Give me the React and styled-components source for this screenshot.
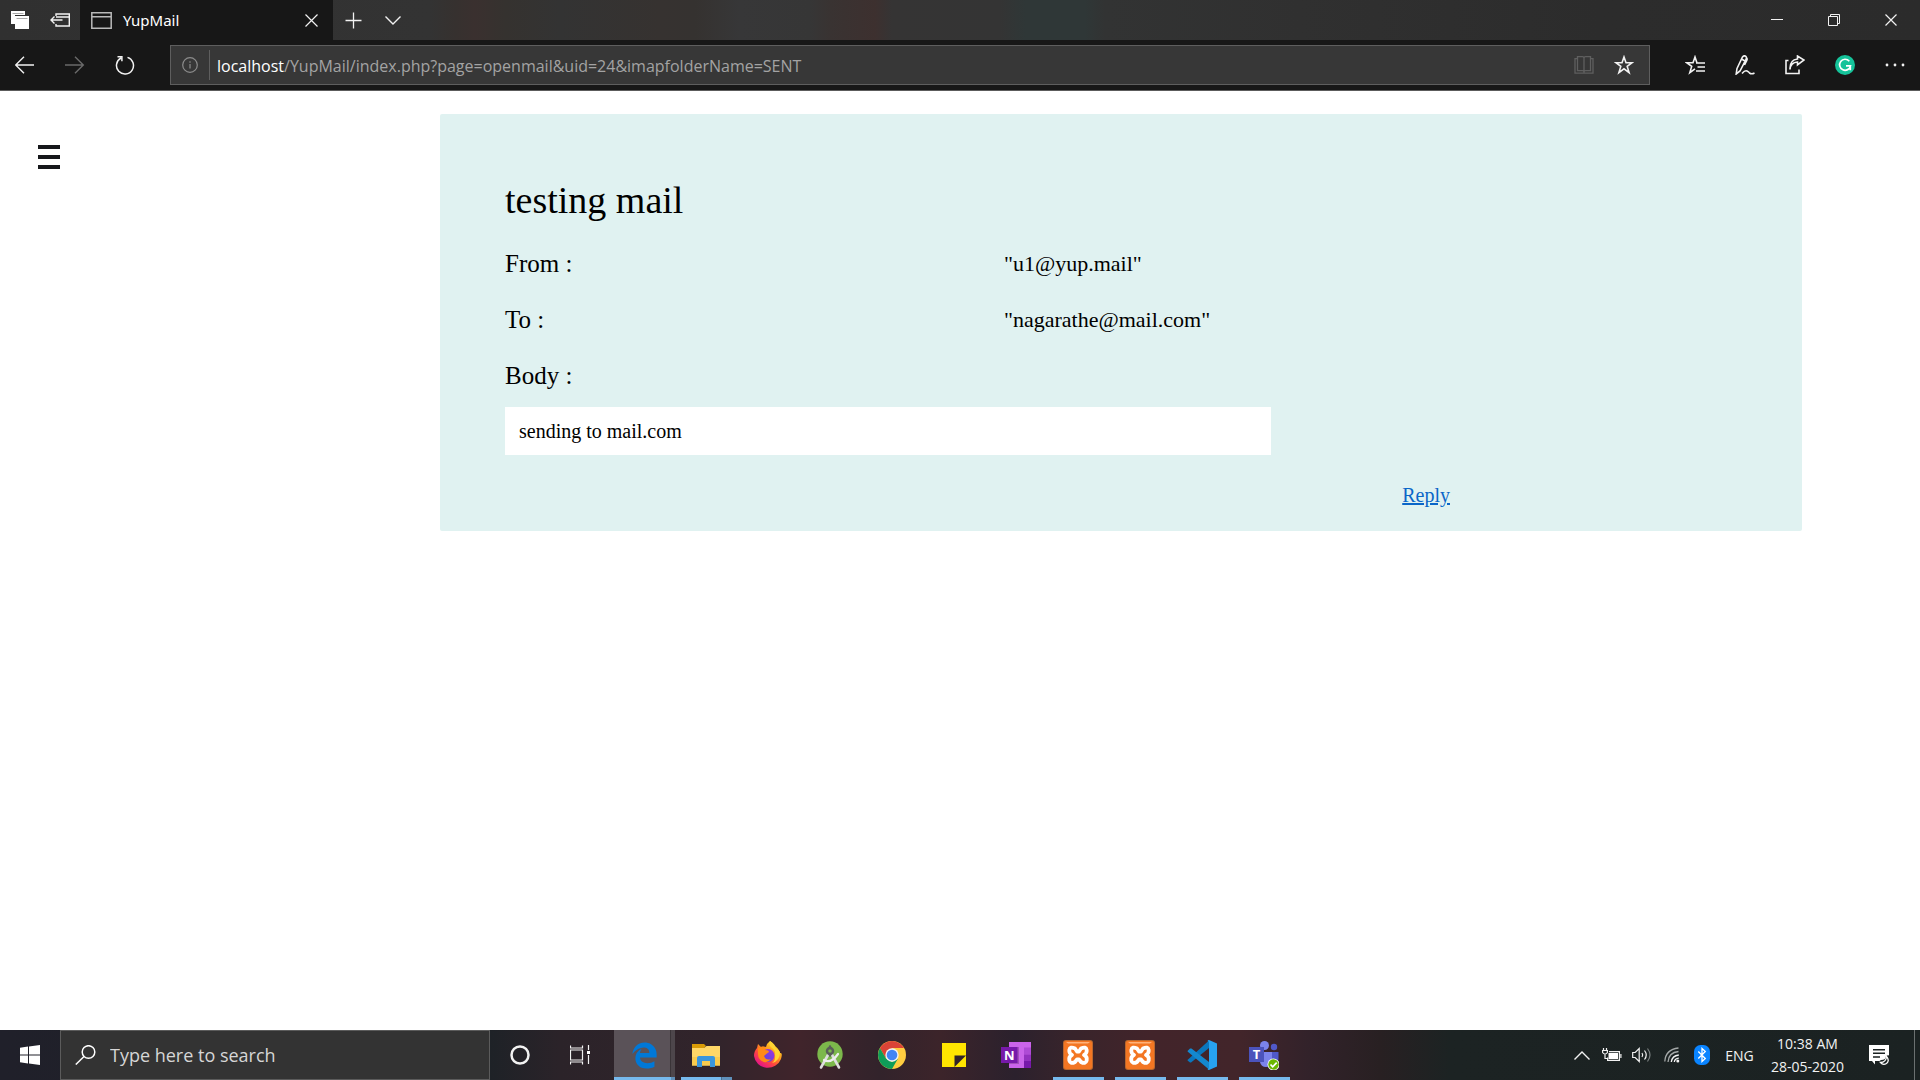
import React from "react";
import styled, { createGlobalStyle, css } from "styled-components";

const ui = `"Open Sans", "Noto Sans", sans-serif`;
const uiWide = `"Noto Sans", "Open Sans", sans-serif`;
const serif = `"Liberation Serif", "Times New Roman", serif`;

const GlobalStyle = createGlobalStyle`
  *, *::before, *::after { box-sizing: border-box; }
  body { margin: 0; background: #fff; }
  button, input { font: inherit; color: inherit; }
  svg { display: block; flex: none; }
`;

const Desktop = styled.div`
  display: flex;
  flex-direction: column;
  min-height: 100vh;
  font-family: ${ui};
`;

/* ---------- Browser chrome ---------- */

const IconButton = styled.button`
  display: flex;
  align-items: center;
  justify-content: center;
  flex: none;
  width: ${(p) => p.$width || 40}px;
  align-self: stretch;
  padding: 0;
  border: 0;
  background: none;
  color: ${(p) => p.$color || "#f2f2f2"};
`;

const TabStrip = styled.header`
  display: flex;
  height: 40px;
  background: linear-gradient(90deg, #303030 0, #333 430px, #36312f 455px, #3a302f 475px, #35322f 505px, #333 560px, #363230 660px, #353230 695px, #373738 740px, #363636 810px, #393332 830px, #3d302f 875px, #353434 892px, #343434 1000px, #2f3737 1025px, #2f3737 1085px, #323333 1105px, #303030 1300px, #2c2c2c 1600px, #2b2b2b 100%);
`;

const Tab = styled.div`
  display: flex;
  align-items: center;
  width: 253px;
  padding-left: 11px;
  gap: 11px;
  background: #171717;
  color: #fff;
  font-family: ${uiWide};
  font-size: 15px;
  line-height: 20px;
`;

const TabTitle = styled.span`
  flex: 1;
`;

const WindowControls = styled.div`
  display: flex;
  gap: 1px;
  margin-left: auto;
  padding-right: 1px;
`;

const Toolbar = styled.nav`
  display: flex;
  align-items: center;
  height: 51px;
  background: #171717;
  border-bottom: 1px solid #5c5c5c;
`;

const AddressBar = styled.div`
  display: flex;
  align-items: center;
  flex: 1;
  height: 40px;
  margin: 0 20px;
  padding-right: 5px;
  background: #373737;
  border: 1px solid #5e5e5e;
`;

const Divider = styled.span`
  width: 1px;
  height: 30px;
  background: #5e5e5e;
`;

const Url = styled.div`
  flex: 1;
  padding: 2px 0 0 7px;
  color: #a3a3a3;
  font-size: 16px;
  line-height: 20px;
  b {
    color: #fff;
    font-weight: 400;
  }
`;

/* ---------- Mail page ---------- */

const Page = styled.div`
  display: grid;
  grid-template-columns: 440px 1fr;
  flex: 1;
  align-items: start;
  padding: 23px 118px 23px 0;
  font-family: ${serif};
  color: #000;
`;

const MenuButton = styled.button`
  display: flex;
  flex-direction: column;
  gap: 6px;
  width: 22px;
  margin: 31px 38px;
  padding: 0;
  border: 0;
  background: none;
`;

const MenuBar = styled.span`
  height: 4px;
  background: #16181b;
`;

const MailCard = styled.main`
  padding: 60px 65px 21px;
  border-radius: 2px;
  background: #e0f2f1;
`;

const Subject = styled.h1`
  margin: 0;
  font-size: 38px;
  font-weight: 400;
  line-height: 52px;
`;

const Fields = styled.dl`
  display: grid;
  grid-template-columns: 499px 1fr;
  row-gap: 16px;
  margin: 18px 0 0;
  line-height: 40px;
`;

const Label = styled.dt`
  font-size: 25px;
`;

const Value = styled.dd`
  margin: 0;
  font-size: 22px;
`;

const Body = styled.p`
  max-width: 766px;
  margin: 11px 0 0;
  padding: 10px 14px;
  background: #fff;
  font-size: 20px;
  line-height: 28px;
`;

const Actions = styled.div`
  display: flex;
  justify-content: flex-end;
  margin-top: 25px;
  padding-right: 287px;
`;

const ReplyLink = styled.a`
  color: #0a66c8;
  font-size: 20px;
  line-height: 30px;
`;

/* ---------- Taskbar ---------- */

const Taskbar = styled.footer`
  display: flex;
  height: 50px;
  color: #fff;
  background: linear-gradient(90deg, #20202a 0, #1e2227 490px, #2b2329 560px, #32242b 720px, #40242b 800px, #32232b 880px, #3c242a 940px, #2b212d 1015px, #38242b 1070px, #42242a 1150px, #42252a 1240px, #32222a 1310px, #282022 1380px, #1c2323 1450px, #1b2222 100%);
`;

const SearchBox = styled.label`
  display: flex;
  align-items: center;
  width: 430px;
  padding-left: 14px;
  gap: 14px;
  background: #333;
  border: 1px solid #5b5b5b;
`;

const SearchInput = styled.input`
  flex: 1;
  min-width: 0;
  padding: 0;
  border: 0;
  outline: 0;
  background: none;
  font-size: 18px;
  line-height: 24px;
  &::placeholder {
    color: #d6d6d6;
    opacity: 1;
  }
`;

const Apps = styled.div`
  display: flex;
  margin-left: 3px;
`;

const AppButton = styled(IconButton)`
  width: 62px;
  background-repeat: no-repeat;
  ${(p) =>
    p.$state === "open" &&
    css`
      background-image: linear-gradient(#76b9ed, #76b9ed);
      background-position: 6px 100%;
      background-size: 51px 3px;
    `}
  ${(p) =>
    p.$state === "stacked" &&
    css`
      background-image: linear-gradient(90deg, #76b9ed 40px, #4c6f8f 40px, #4c6f8f 41px, #5f90ba 41px);
      background-position: 6px 100%;
      background-size: 51px 3px;
    `}
  ${(p) =>
    p.$state === "active" &&
    css`
      background-image: linear-gradient(90deg, #76b9ed 57px, #5f90ba 57px),
        linear-gradient(90deg, #5a5258 56px, #3a3438 56px, #3a3438 57px, #4d464b 57px);
      background-position: 1px 100%, 1px 0;
      background-size: 61px 3px, 61px 50px;
    `}
`;

const Tray = styled.div`
  display: flex;
  align-items: center;
  margin-left: auto;
  font-size: 14px;
`;

const Clock = styled(IconButton)`
  flex-direction: column;
  line-height: 23px;
`;

const ShowDesktop = styled.button`
  align-self: stretch;
  width: 6px;
  margin-left: 9px;
  padding: 0;
  border: 0;
  border-left: 1px solid #6b7070;
  background: none;
`;

/* ---------- Icons ---------- */

const Line = ({ w = 20, h = 20, sw = 1, children, ...rest }) => (
  <svg width={w} height={h} viewBox={`0 0 ${w} ${h}`} fill="none" stroke="currentColor" strokeWidth={sw} aria-hidden="true" {...rest}>
    {children}
  </svg>
);

const TabsIcon = () => (
  <Line w={18} h={18} stroke="none">
    <path fill="#fff" d="M0 0h14v4H4v9H0z" />
    <path fill="#fff" d="M4 5h14v13H4z" />
    <path stroke="#aaa" d="M1.500 2.500h11M5.500 7.500h11" />
  </Line>
);

const SetAsideIcon = () => (
  <Line w={20} h={14} sw={1.400}>
    <path d="M6 3V1h13.300v12H6v-2M6 4h13M1 7h11.500M4.500 3.500L1 7l3.500 3.500" />
  </Line>
);

const PageIcon = () => (
  <Line w={21} h={17} stroke="#b9b9b9" sw={1.500}>
    <path d="M.8.8h19.400v15.400H.8zM1 4.800h19" />
  </Line>
);

const CrossIcon = ({ size = 13 }) => (
  <Line w={size} h={size} sw={1.200}>
    <path d={`M.5.5l${size - 1} ${size - 1}M${size - 0.5}.5L.5 ${size - 0.5}`} />
  </Line>
);

const PlusIcon = () => (
  <Line w={17} h={17} sw={1.300}>
    <path d="M8.500.5v16M.5 8.500h16" />
  </Line>
);

const ChevronIcon = ({ up }) => (
  <Line w={16} h={9} sw={1.400}>
    <path d={up ? "M.5 8.500L8 1l7.500 7.500" : "M.5.5L8 8 15.500.5"} />
  </Line>
);

const MinimizeIcon = () => (
  <Line w={12} h={12}>
    <path d="M0 5.500h12" />
  </Line>
);

const RestoreIcon = () => (
  <Line w={12} h={12}>
    <path d="M.5 2.500h9v9h-9zM2.500 2.500v-2h9v9h-2" />
  </Line>
);

const ArrowIcon = ({ right }) => (
  <Line w={20} h={18} sw={1.400}>
    <path d={right ? "M0 9h18.500M10 .7L18.300 9 10 17.300" : "M19 9H1M9 .7L.7 9 9 17.300"} />
  </Line>
);

const RefreshIcon = () => (
  <Line w={20} h={20} sw={1.500}>
    <path d="M12.500 2.400a8.500 8.500 0 1 1-6.500.6M2.500 1.800h4.400v4.400" />
  </Line>
);

const InfoIcon = () => (
  <Line w={16} h={16} sw={1.200}>
    <circle cx="8" cy="8" r="7.300" />
    <path d="M8 7v4.500M8 4.300v1.400" />
  </Line>
);

const BookIcon = () => (
  <Line w={20} h={18} sw={1.300}>
    <path d="M3.500.7h5q1.500 0 1.500 1.300Q10 .7 11.500.7h5v14h-5Q10 14.700 10 16q0-1.300-1.500-1.300h-5zM10 2v15M3.500 2.700H1v14.500h18V2.700h-2.500" />
  </Line>
);

const StarIcon = () => (
  <Line w={20} h={20} sw={1.600}>
    <path d="M10 2l2 5.700h6.200l-5 3.700 1.900 6.200-5.100-3.800-5.100 3.800 1.900-6.200-5-3.700H8z" />
  </Line>
);

const FavoritesIcon = () => (
  <Line w={20} h={20} sw={1.600}>
    <path d="M12.500 8H12l-2-6-2 5.700H1.700l5 3.700-1.900 6.200L10 13.800M11 8h9M12.500 12H20M11 16h9" />
  </Line>
);

const PenIcon = () => (
  <Line w={20} h={20} sw={1.600}>
    <path d="M2 13.500L7.500 2q1.500-2 3.300-.7 1.200 1 .2 3L5 16l-3.800 3zM2 13.500L1.200 19M6.500 4l3.500 2M11 2.500q1.700 1 .8 2.800L9.500 10M7 18.500q3-3.500 5-2.500t2.500 2q2 1.500 5 0" />
  </Line>
);

const ShareIcon = () => (
  <Line w={20} h={20} sw={1.600}>
    <path d="M3.500 5.500H1v13h13v-4M5 14.500q.5-7 7.500-7.500V10l6.500-5-6.500-4v3Q4.500 5 5 14.500z" />
  </Line>
);

const GrammarlyIcon = () => (
  <Line w={20} h={20}>
    <circle cx="10" cy="10" r="10" fill="#15c39a" stroke="none" />
    <path stroke="#fff" strokeWidth="1.700" d="M14.300 6.200A5.500 5.500 0 1 0 15.500 10.800H11M15.300 10.500v4.700" />
  </Line>
);

const DotsIcon = () => (
  <Line w={20} h={4} stroke="none">
    <g fill="#f2f2f2">
      <circle cx="2" cy="2" r="1.400" />
      <circle cx="10" cy="2" r="1.400" />
      <circle cx="18" cy="2" r="1.400" />
    </g>
  </Line>
);

const WindowsLogo = () => (
  <Line w={20} h={20} stroke="none">
    <path fill="#fff" d="M0 2.700L8 1.600V9.500H0zM9 1.400L20 0v9.500H9zM0 10.500h8v7.900l-8-1.100zM9 10.500h11V20L9 18.500z" />
  </Line>
);

const SearchIcon = () => (
  <Line w={21} h={20} sw={1.500}>
    <circle cx="13.500" cy="7" r="6.300" />
    <path d="M9 11.500L.8 19.500" />
  </Line>
);

const CortanaIcon = () => (
  <Line w={20} h={20} sw={2.500}>
    <circle cx="10" cy="10" r="8.500" />
  </Line>
);

const TaskViewIcon = () => (
  <Line w={20} h={20} sw={1.200}>
    <path d="M.5 5h12v10H.5zM.5.500V3h12V.500M.5 19.500V17h12v2.500M18.500 0v5M18.500 10v9" />
    <path fill="#fff" stroke="none" d="M17 6h3v3h-3z" />
  </Line>
);

const EdgeIcon = () => (
  <svg width="27" height="27" viewBox="0 0 512 512" aria-hidden="true">
    <path
      fill="#0078d7"
      d="M486.286 243.671c0-44.032-7.754-84.465-28.801-122.405C416.498 47.879 343.912 8.001 258.893 8.001 118.962 7.724 40.617 113.214 26.056 227.679c42.429-61.312 117.073-121.376 220.375-124.966 0 0 109.666 0 99.419 104.957H169.997c6.369-37.386 18.554-58.986 34.339-78.926-75.048 34.893-121.850 96.096-120.742 188.315.83 71.448 50.124 144.836 120.743 171.976 83.357 31.847 192.776 7.200 240.132-21.321V363.307c-80.864 56.494-270.871 60.925-272.255-67.572h314.073v-52.064z"
    />
  </svg>
);

const FolderIcon = () => (
  <Line w={28} h={24} stroke="none">
    <path fill="#d99b06" d="M0 1h12l2 2-2 2H0z" />
    <path fill="#ffd767" d="M0 5h12l2.500-2H28v19.500H0z" />
    <path fill="#f9cb4e" d="M0 14h28v8.500H0z" />
    <path fill="#3a96dd" d="M5 15q0-2 2-2h14q2 0 2 2v9h-5v-6h-8v6H5z" />
  </Line>
);

const FirefoxIcon = () => (
  <Line w={30} h={30} stroke="none">
    <defs>
      <linearGradient id="fx" x1=".8" y1=".1" x2=".2" y2=".9">
        <stop offset="0" stopColor="#ffe226" />
        <stop offset=".35" stopColor="#ff9a1f" />
        <stop offset=".65" stopColor="#ff4a3c" />
        <stop offset="1" stopColor="#e31587" />
      </linearGradient>
      <linearGradient id="fxg" x1="0" y1="1" x2="1" y2="0">
        <stop offset="0" stopColor="#4a4be0" />
        <stop offset="1" stopColor="#a530dd" />
      </linearGradient>
    </defs>
    <path fill="url(#fx)" d="M17 1q2 1 4 5 4 1 6 7 3-1 1 6a14 13.500 0 0 1-27-3q0-5 3-8l1-4 3 3q3-1 5 0 1-4 4-6z" />
    <circle cx="15" cy="15.500" r="6.500" fill="url(#fxg)" />
    <path fill="#ff8a16" d="M5 8q5-3 8 0l-1 2q4 0 4 2-3 2-5 4 2 5 7 3-3 4-7 3-6-2-6-8z" />
    <path fill="#ffd432" d="M17 1q-2 4 2 7t3 7q1 5-3 8 8-2 8-11-2-3-4-4-1-4-6-7z" />
  </Line>
);

const AndroidStudioIcon = () => (
  <Line w={30} h={30} strokeLinecap="round">
    <circle cx="15" cy="14" r="12.700" fill="#7cb84b" stroke="none" />
    <path stroke="#dedede" strokeWidth="2.600" d="M13.500 14L6 27.500M16.500 14L24 27.500" />
    <path stroke="#eee" strokeWidth="2.200" d="M9 20q7 4 14-6" />
    <circle cx="15" cy="11" r="3" stroke="#595f58" strokeWidth="2.500" />
    <path stroke="#595f58" strokeWidth="2.500" d="M15 6.500V8M15 14v1.500" />
  </Line>
);

const ChromeIcon = () => (
  <Line w={28} h={28} stroke="none">
    <circle cx="14" cy="14" r="14" fill="#ffcd40" />
    <path fill="#db4437" d="M1.900 7A14 14 0 0 1 26.100 7H14L8 17.500z" />
    <path fill="#0f9d58" d="M1.900 7L8 17.500l6 3.500 6-3.500L14 28A14 14 0 0 1 1.900 7z" />
    <circle cx="14" cy="14" r="6.700" fill="#f1f1f1" />
    <circle cx="14" cy="14" r="5.300" fill="#4285f4" />
  </Line>
);

const StickyNotesIcon = () => (
  <Line w={24} h={24} stroke="none">
    <path fill="#ffe500" d="M0 0h24v24H0z" />
    <path fill="#302329" d="M12.500 12.500H24L12.500 24z" />
  </Line>
);

const glyph = { fontFamily: ui, fontWeight: 700, fontSize: 13 };

const OneNoteIcon = () => (
  <Line w={30} h={28} stroke="none">
    <path fill="#ca64ea" d="M8 1h22v26H8z" />
    <path fill="#ae4bd5" d="M23 6.500h7v7h-7z" />
    <path fill="#9332bf" d="M23 13.500h7V20h-7z" />
    <path fill="#7719aa" d="M23 20h7v7h-7z" />
    <path fill="#000" opacity=".2" d="M8 6h10v17H8z" />
    <path fill="#7719aa" d="M0 6h16.500v16H0z" />
    <text x="8.200" y="18.600" textAnchor="middle" fill="#fff" style={glyph}>N</text>
  </Line>
);

const XamppIcon = () => (
  <Line w={30} h={30} stroke="none">
    <rect width="30" height="30" rx="3" fill="#b9672d" />
    <rect x="1" y="1" width="28" height="28" rx="2" fill="#f37623" />
    <path fill="#ffb27a" d="M3 2h24l-2 1.500H5z" />
    <path
      fill="none"
      stroke="#fff"
      strokeWidth="3.800"
      strokeLinejoin="round"
      d="M12 8.500Q7 6 6.300 10q-.3 3.500 2.700 5-3.500 1.500-2.700 5.500 1.200 4 5.700 1.500l2-2.500h2l2 2.500q4.500 2.500 5.700-1.500.8-4-2.700-5.500 3-1.500 2.700-5-.7-4-5.700-1.500l-2 3h-2z"
    />
  </Line>
);

const VsCodeIcon = () => (
  <Line w={30} h={30} stroke="none">
    <path fill="#0a76bd" d="M1 19.500L22 .500V8L4 22.500H3L.5 20.500z" />
    <path fill="#1488cf" d="M1 10.500l2-2h1.500L22 22v7.500L.5 11.500z" />
    <path fill="#27a2f0" d="M22 0l8 3.500v23L22 30q-1 0-1.500-1 1.500 0 1.500-2V3q0-2-1.500-2Q21 0 22 0z" />
  </Line>
);

const TeamsIcon = () => (
  <Line w={30} h={30} stroke="none">
    <circle cx="15.500" cy="5.500" r="4.500" fill="#7b83eb" />
    <circle cx="25" cy="7" r="3.200" fill="#5059c9" />
    <path fill="#5059c9" d="M21 12h8.500v7q-1 5-6 5h-3z" />
    <path fill="#7b83eb" d="M11 12h12v9q-1 6-6 6t-6-5z" />
    <path fill="#4b53bc" d="M0 7h15v15H0z" />
    <text x="7.500" y="19" textAnchor="middle" fill="#fff" style={glyph}>T</text>
    <circle cx="24.500" cy="24.500" r="6" fill="#fff" />
    <circle cx="24.500" cy="24.500" r="5.200" fill="#6bb700" />
    <path d="M21.500 24.500l2.200 2.300 4-4.200" fill="none" stroke="#fff" strokeWidth="1.700" />
  </Line>
);

const BatteryIcon = () => (
  <Line w={20} h={14} sw={1.200}>
    <path d="M7 3.600h10.400v8.800H5.600V9.500M18.900 6v4" />
    <path fill="#fff" stroke="none" d="M6.500 5h9.500v6H6.500z" />
    <path d="M1.500 0v2.500M4.500 0v2.500M.6 2.500h4.800v2q-.8 1.500-2.400 1.500T.6 4.500zM3 6v4.500h2.500" />
  </Line>
);

const VolumeIcon = () => (
  <Line w={20} h={18} sw={1.200}>
    <path d="M.7 6.500h2.500l4-4v13l-4-4H.7zM10 7q1.500 2 0 4M12.500 4.500q3.500 4.500 0 9" />
    <path stroke="#7b8080" d="M15.500 2.500q5 6.500 0 13" />
  </Line>
);

const WifiIcon = () => (
  <Line w={16} h={16} sw={1.300}>
    <path stroke="#a5a9a9" d="M.8 14.500Q1.500 2.500 14.500 1M4 15Q4.500 5.500 14.500 4.500" />
    <path d="M7.300 15Q8 8.800 14.800 8M10.300 15q.5-3.500 4.500-3.800" />
    <circle cx="13.800" cy="14" r="1.500" fill="currentColor" stroke="none" />
  </Line>
);

const BluetoothIcon = () => (
  <Line w={16} h={20}>
    <rect width="16" height="20" rx="6.500" fill="#0a84ff" stroke="none" />
    <path stroke="#fff" strokeWidth="1.300" d="M4.300 6.500l7 7-3.300 3v-13l3.300 3-7 7" />
  </Line>
);

const NotificationIcon = () => (
  <Line w={20} h={20} stroke="none">
    <path fill="#fff" d="M0 0h20v10.500q-1-.5-3 .5 0 4-5 4l-1.500 1H6v3.500L3 16H0z" />
    <path stroke="#1b2222" strokeWidth="1.400" d="M4 4.700h12M4 8.300h12M4 12h7" />
    <path stroke="#fff" strokeWidth="1.300" d="M17.500 11.500q3.500 4 0 7-3.500 2-6-1 5.500 0 6-6z" />
  </Line>
);

const apps = [
  { name: "Microsoft Edge", state: "active", icon: <EdgeIcon /> },
  { name: "File Explorer", state: "stacked", icon: <FolderIcon /> },
  { name: "Firefox", icon: <FirefoxIcon /> },
  { name: "Android Studio", icon: <AndroidStudioIcon /> },
  { name: "Chrome", icon: <ChromeIcon /> },
  { name: "Sticky Notes", icon: <StickyNotesIcon /> },
  { name: "OneNote", icon: <OneNoteIcon /> },
  { name: "XAMPP Control Panel", state: "open", icon: <XamppIcon /> },
  { name: "XAMPP Shell", state: "open", icon: <XamppIcon /> },
  { name: "Visual Studio Code", state: "open", icon: <VsCodeIcon /> },
  { name: "Microsoft Teams", state: "open", icon: <TeamsIcon /> },
];

export default function App() {
  return (
    <Desktop>
      <GlobalStyle />

      <TabStrip>
        <IconButton aria-label="Tabs you've set aside"><TabsIcon /></IconButton>
        <IconButton aria-label="Set these tabs aside"><SetAsideIcon /></IconButton>
        <Tab>
          <PageIcon />
          <TabTitle>YupMail</TabTitle>
          <IconButton $width={43} aria-label="Close tab"><CrossIcon /></IconButton>
        </Tab>
        <IconButton aria-label="New tab"><PlusIcon /></IconButton>
        <IconButton aria-label="Show tab previews"><ChevronIcon /></IconButton>
        <WindowControls>
          <IconButton $width={56} aria-label="Minimize"><MinimizeIcon /></IconButton>
          <IconButton $width={56} aria-label="Restore"><RestoreIcon /></IconButton>
          <IconButton $width={56} aria-label="Close"><CrossIcon size={12} /></IconButton>
        </WindowControls>
      </TabStrip>

      <Toolbar>
        <IconButton $width={50} aria-label="Back"><ArrowIcon /></IconButton>
        <IconButton $width={50} $color="#6a6a6a" aria-label="Forward"><ArrowIcon right /></IconButton>
        <IconButton $width={50} aria-label="Refresh"><RefreshIcon /></IconButton>
        <AddressBar>
          <IconButton $width={38} $color="#8c8c8c" aria-label="Site information"><InfoIcon /></IconButton>
          <Divider />
          <Url><b>localhost</b>/YupMail/index.php?page=openmail&amp;uid=24&amp;imapfolderName=SENT</Url>
          <IconButton $color="#5f5f5f" aria-label="Reading view"><BookIcon /></IconButton>
          <IconButton aria-label="Add to favorites"><StarIcon /></IconButton>
        </AddressBar>
        <IconButton $width={50} aria-label="Favorites"><FavoritesIcon /></IconButton>
        <IconButton $width={50} aria-label="Add notes"><PenIcon /></IconButton>
        <IconButton $width={50} aria-label="Share"><ShareIcon /></IconButton>
        <IconButton $width={50} aria-label="Grammarly"><GrammarlyIcon /></IconButton>
        <IconButton $width={50} aria-label="More"><DotsIcon /></IconButton>
      </Toolbar>

      <Page>
        <MenuButton aria-label="Open menu">
          <MenuBar />
          <MenuBar />
          <MenuBar />
        </MenuButton>
        <MailCard>
          <Subject>testing mail</Subject>
          <Fields>
            <Label>From :</Label>
            <Value>"u1@yup.mail"</Value>
            <Label>To :</Label>
            <Value>"nagarathe@mail.com"</Value>
            <Label>Body :</Label>
          </Fields>
          <Body>sending to mail.com</Body>
          <Actions>
            <ReplyLink href="#reply">Reply</ReplyLink>
          </Actions>
        </MailCard>
      </Page>

      <Taskbar>
        <IconButton $width={60} aria-label="Start"><WindowsLogo /></IconButton>
        <SearchBox>
          <SearchIcon />
          <SearchInput aria-label="Search" placeholder="Type here to search" />
        </SearchBox>
        <IconButton $width={60} aria-label="Cortana"><CortanaIcon /></IconButton>
        <IconButton $width={60} aria-label="Task view"><TaskViewIcon /></IconButton>
        <Apps>
          {apps.map((app) => (
            <AppButton key={app.name} $width={62} $state={app.state} aria-label={app.name}>
              {app.icon}
            </AppButton>
          ))}
        </Apps>
        <Tray>
          <IconButton $width={30} aria-label="Show hidden icons"><ChevronIcon up /></IconButton>
          <IconButton $width={30} aria-label="Battery"><BatteryIcon /></IconButton>
          <IconButton $width={30} aria-label="Volume"><VolumeIcon /></IconButton>
          <IconButton $width={30} aria-label="Network"><WifiIcon /></IconButton>
          <IconButton $width={30} aria-label="Bluetooth"><BluetoothIcon /></IconButton>
          <IconButton $width={45}>ENG</IconButton>
          <Clock $width={91}>
            <span>10:38 AM</span>
            <span>28-05-2020</span>
          </Clock>
          <IconButton $width={52} aria-label="Notifications"><NotificationIcon /></IconButton>
          <ShowDesktop aria-label="Show desktop" />
        </Tray>
      </Taskbar>
    </Desktop>
  );
}
